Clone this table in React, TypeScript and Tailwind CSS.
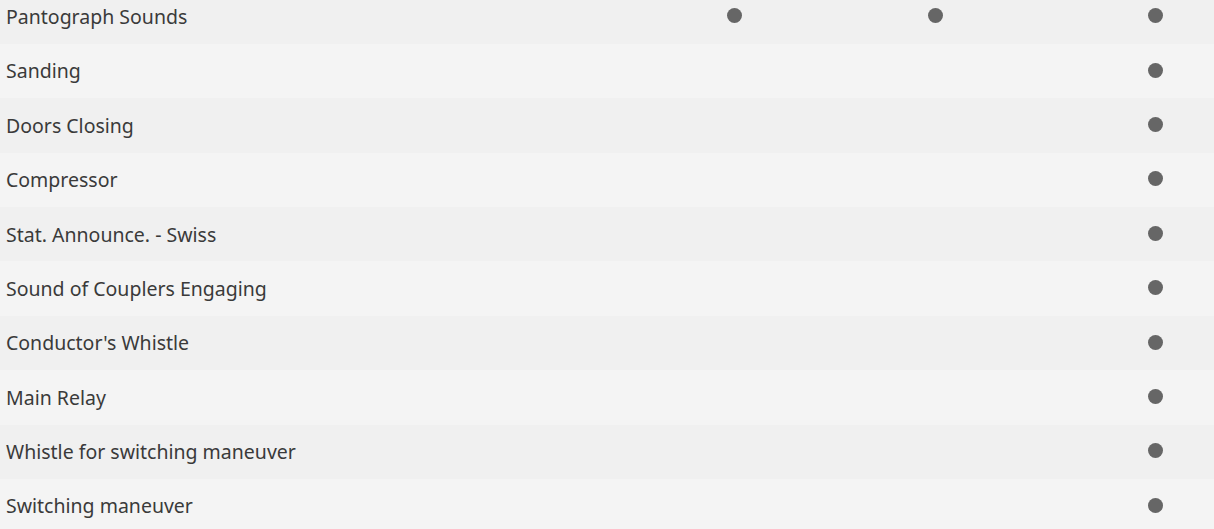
const rows: { name: string; cols: [boolean, boolean, boolean] }[] = [
  { name: 'Pantograph Sounds', cols: [true, true, true] },
  { name: 'Sanding', cols: [false, false, true] },
  { name: 'Doors Closing', cols: [false, false, true] },
  { name: 'Compressor', cols: [false, false, true] },
  { name: 'Stat. Announce. - Swiss', cols: [false, false, true] },
  { name: 'Sound of Couplers Engaging', cols: [false, false, true] },
  { name: "Conductor's Whistle", cols: [false, false, true] },
  { name: 'Main Relay', cols: [false, false, true] },
  { name: 'Whistle for switching maneuver', cols: [false, false, true] },
  { name: 'Switching maneuver', cols: [false, false, true] },
];

function Dot({ on }: { on: boolean }) {
  if (!on) return null;
  return <span className="block w-[15px] h-[15px] rounded-full bg-[#666666] -translate-y-[1px]" />;
}

export default function App() {
  return (
    <div className="w-[1214px] h-[529px] overflow-hidden bg-[#f4f4f4] font-['Noto_Sans',sans-serif] text-[#3a3a3a]">
      <div className="-mt-[10.4px]">
        {rows.map((r, i) => (
          <div
            key={r.name}
            className={`flex items-center h-[54.375px] ${i % 2 === 0 ? 'bg-[#f0f0f0]' : 'bg-[#f4f4f4]'}`}
          >
            <div className="flex-1 pl-1.5 text-[19.5px] leading-none">{r.name}</div>
            <div className="w-[200px] flex justify-center"><Dot on={r.cols[0]} /></div>
            <div className="w-[202px] flex justify-center"><Dot on={r.cols[1]} /></div>
            <div className="w-[178px] flex justify-center pl-[60px]"><Dot on={r.cols[2]} /></div>
          </div>
        ))}
      </div>
    </div>
  );
}
